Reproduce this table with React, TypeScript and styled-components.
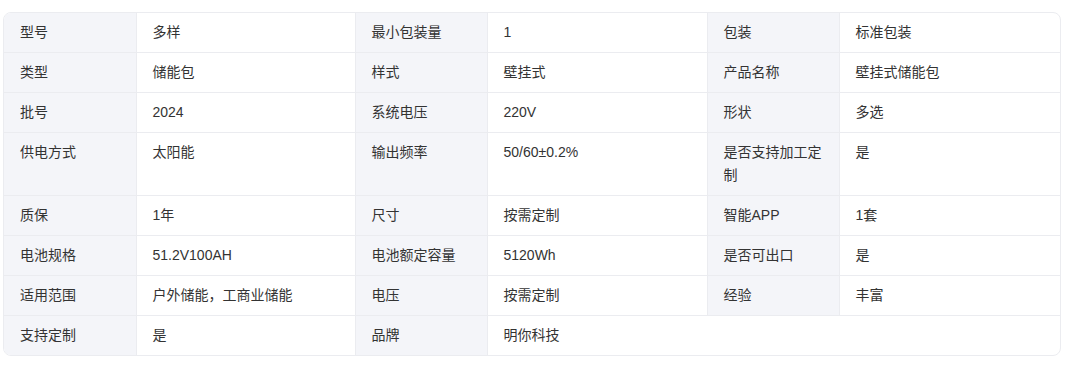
import * as React from "react";
import styled, { createGlobalStyle } from "styled-components";

const GlobalStyle = createGlobalStyle`
  body {
    margin: 0;
    background: #ffffff;
    font-family: "Liberation Sans", "Noto Sans CJK SC", sans-serif;
  }
`;

const Wrapper = styled.div`
  margin: 12px 0 0 3px;
  width: 1058px;
  box-sizing: border-box;
  border: 1px solid #ebecf0;
  border-radius: 8px;
  overflow: hidden;
`;

const Table = styled.table`
  width: 100%;
  table-layout: fixed;
  border-collapse: collapse;
  font-size: 14px;
  line-height: 23px;
  color: #333333;
`;

const Row = styled.tr`
  &:last-child > * {
    border-bottom: none;
  }
`;

const Cell = styled.td`
  padding: 8px 16px;
  text-align: left;
  vertical-align: top;
  font-weight: 400;
  border-right: 1px solid #ebecf0;
  border-bottom: 1px solid #ebecf0;
  &:last-child {
    border-right: none;
  }
`;

const LabelCell = styled(Cell).attrs({ as: "th" })`
  background: #f4f5f9;
`;

type Pair = [string, string];

// each row: up to three label/value pairs, last pair may stretch
const rows: Pair[][] = [
  [["型号", "多样"], ["最小包装量", "1"], ["包装", "标准包装"]],
  [["类型", "储能包"], ["样式", "壁挂式"], ["产品名称", "壁挂式储能包"]],
  [["批号", "2024"], ["系统电压", "220V"], ["形状", "多选"]],
  [["供电方式", "太阳能"], ["输出频率", "50/60±0.2%"], ["是否支持加工定制", "是"]],
  [["质保", "1年"], ["尺寸", "按需定制"], ["智能APP", "1套"]],
  [["电池规格", "51.2V100AH"], ["电池额定容量", "5120Wh"], ["是否可出口", "是"]],
  [["适用范围", "户外储能，工商业储能"], ["电压", "按需定制"], ["经验", "丰富"]],
  [["支持定制", "是"], ["品牌", "明你科技"]],
];

const widths = [132, 219, 132, 220, 132, 221];

export default function App() {
  return (
    <>
      <GlobalStyle />
      <Wrapper>
        <Table>
          <colgroup>
            {widths.map((w, i) => (
              <col key={i} style={{ width: w }} />
            ))}
          </colgroup>
          <tbody>
            {rows.map((pairs, r) => (
              <Row key={r}>
                {pairs.map(([label, value], i) => {
                  const isLast = i === pairs.length - 1;
                  const span = isLast ? 1 + (3 - pairs.length) * 2 : 1;
                  return (
                    <React.Fragment key={i}>
                      <LabelCell>{label}</LabelCell>
                      <Cell colSpan={span}>{value}</Cell>
                    </React.Fragment>
                  );
                })}
              </Row>
            ))}
          </tbody>
        </Table>
      </Wrapper>
    </>
  );
}
